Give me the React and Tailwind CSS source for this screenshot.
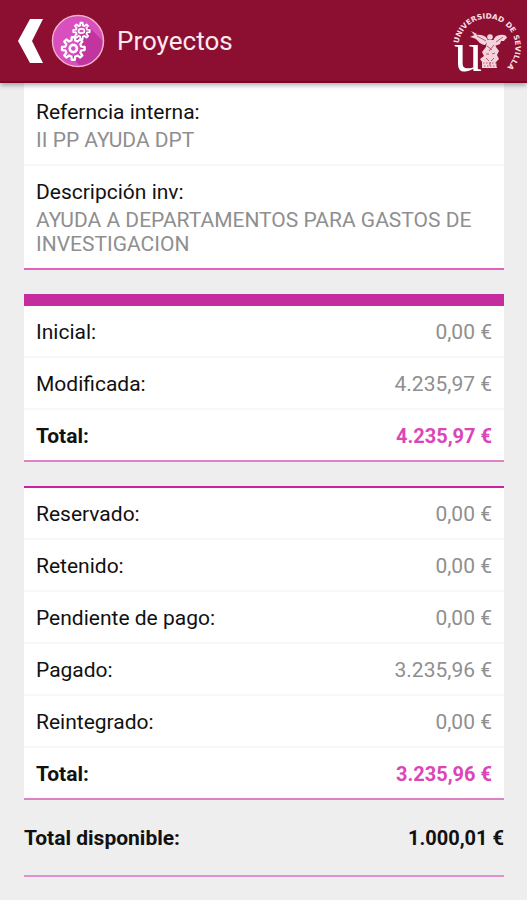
const detalles = [
  { label: 'Referncia interna:', value: 'II PP AYUDA DPT' },
  { label: 'Descripción inv:', value: 'AYUDA A DEPARTAMENTOS PARA GASTOS DE INVESTIGACION' },
];

const presupuesto = [
  { label: 'Inicial:', value: '0,00 €' },
  { label: 'Modificada:', value: '4.235,97 €' },
  { label: 'Total:', value: '4.235,97 €', total: true },
];

const gastos = [
  { label: 'Reservado:', value: '0,00 €' },
  { label: 'Retenido:', value: '0,00 €' },
  { label: 'Pendiente de pago:', value: '0,00 €' },
  { label: 'Pagado:', value: '3.235,96 €' },
  { label: 'Reintegrado:', value: '0,00 €' },
  { label: 'Total:', value: '3.235,96 €', total: true },
];

// outline of a gear with n teeth, centred on cx, cy
const gearPath = (cx, cy, inner, outer, n) => {
  const step = (Math.PI * 2) / n;
  const points = [];
  for (let i = 0; i < n; i++) {
    [[-0.3, inner], [-0.17, outer], [0.17, outer], [0.3, inner]].forEach(([offset, r]) => {
      const a = (i + offset) * step;
      points.push(`${(cx + r * Math.cos(a)).toFixed(2)} ${(cy + r * Math.sin(a)).toFixed(2)}`);
    });
  }
  return `M${points.join('L')}Z`;
};

const BackIcon = () => (
  <svg viewBox="0 0 26 46" className="w-[26px] h-[46px]" fill="#fff" aria-hidden="true">
    <path d="M12 1H25L14 23L25 45H12L0 23Z" />
  </svg>
);

const ProjectsIcon = () => (
  <svg viewBox="0 0 54 54" className="w-[54px] h-[54px]" aria-hidden="true">
    <defs>
      <clipPath id="disc"><circle cx="27" cy="27" r="25" /></clipPath>
    </defs>
    <circle cx="27" cy="27" r="25" fill="#d94fc0" />
    <path d="M37 12L60 35V60H36L21 43L30 36L26 25Z" fill="#c2359f" clipPath="url(#disc)" />
    <circle cx="27" cy="27" r="25.5" fill="none" stroke="#f3b3cf" strokeWidth="1.5" />
    <g fill="none" stroke="#fff" strokeLinejoin="round">
      <path d={gearPath(22.3, 34.5, 8.2, 11.4, 8)} strokeWidth="2.3" />
      <circle cx="22.3" cy="34.5" r="3.6" strokeWidth="2.6" />
      <path d={gearPath(30.5, 17, 5.8, 8.3, 8)} strokeWidth="1.8" />
      <ellipse cx="30.5" cy="17" rx="3" ry="2.2" strokeWidth="1.7" />
    </g>
  </svg>
);

const UniversityLogo = () => (
  <svg viewBox="0 0 74 80" className="w-[74px] h-20 overflow-visible" role="img" aria-label="Universidad de Sevilla">
    <path id="ring" d="M5.7 42.5A28.5 28.5 0 1 1 44 72.7" fill="none" />
    <text fill="#f6dfe5" fontFamily="DejaVu Sans, sans-serif" fontSize="7.4" fontWeight="700">
      <textPath href="#ring">UNIVERSIDAD DE SEVILLA</textPath>
    </text>
    <text x="1" y="70" fill="#fff" fontFamily="Liberation Serif, serif" fontSize="56">u</text>
    <g fill="#f4d3dc">
      <path d="M35 40Q34 35 28 34Q22 33 17 36Q23 37 25 40Q27 43 32 44Z" />
      <path d="M40 40Q42 34 47 34Q53 33 54 37Q52 38 51 40L48 40L47 43Q45 44 41 45Z" />
      <circle cx="37" cy="36" r="2.8" />
      <path d="M34 39L41 39L43 46L46 50L44 54L46 58L43 61L44 67H29L29 61L27 58L31 55L29 51L33 46Z" />
      <path d="M18 30L24 33L22 35Z" />
    </g>
    <g fill="none" stroke="#a63c5c" strokeWidth="0.8">
      <path d="M34 45L39 49M41 44L36 50M33 53H36M39 53L42 52M33 57L36 60M41 57L38 60M24 35L33 40M50 36L43 41M37 61V65" />
      <path d="M30 62H44M31 65H44" strokeDasharray="1.5 1.5" />
    </g>
  </svg>
);

const AmountRow = ({ label, value, total }) => (
  <div className={`flex items-center justify-between px-3 pt-[14px] pb-3 ${total ? 'font-bold' : ''}`}>
    <dt>{label}</dt>
    <dd className={total ? 'text-[20px] text-[#dc45b8]' : 'text-[#8f8f8f]'}>{value}</dd>
  </div>
);

const AmountCard = ({ rows, className }) => (
  <dl className={`bg-white border-b-2 border-[#dc83c8] divide-y-2 divide-[#f7f7f7] ${className}`}>
    {rows.map((row) => <AmountRow key={row.label} {...row} />)}
  </dl>
);

export default function App() {
  return (
    <div className="min-h-screen bg-[#eeeeee] font-['Roboto',sans-serif] text-[21px] leading-6 text-[#111]">
      <header className="relative flex items-center justify-between h-[83px] pl-[18px] bg-[#8c0f32] border-b-2 border-[#780728] shadow-[0_2px_5px_rgba(0,0,0,0.35)]">
        <div className="flex items-center">
          <button type="button" aria-label="Volver" className="mr-[7px]"><BackIcon /></button>
          <ProjectsIcon />
          <h1 className="ml-3 text-[26px] leading-8 text-[#fbe9ee]">Proyectos</h1>
        </div>
        <UniversityLogo />
      </header>

      <main className="pl-6 pr-[23px]">
        <dl className="pt-[3px] bg-white border-b-2 border-[#dc64bc] divide-y-2 divide-[#f7f7f7]">
          {detalles.map(({ label, value }) => (
            <div key={label} className="px-3 pt-[14px] pb-3">
              <dt>{label}</dt>
              <dd className="mt-1 text-[#8f8f8f]">{value}</dd>
            </div>
          ))}
        </dl>

        <AmountCard rows={presupuesto} className="mt-6 border-t-12 border-t-[#c42d9e]" />
        <AmountCard rows={gastos} className="mt-6 border-t-2 border-t-[#d020a4]" />

        <dl className="flex items-center justify-between pt-[26px] pb-[25px] font-bold border-b-2 border-[#e48fd0]">
          <dt>Total disponible:</dt>
          <dd className="text-[20px]">1.000,01 €</dd>
        </dl>
      </main>
    </div>
  );
}
